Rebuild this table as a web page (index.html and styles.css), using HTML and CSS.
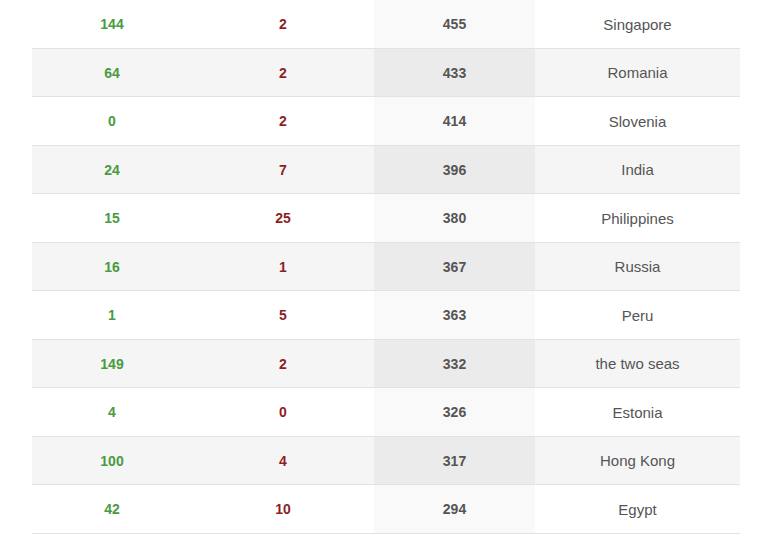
FILE: index.html
```html
<!DOCTYPE html>
<html>
<head>
<meta charset="utf-8">
<link rel="stylesheet" href="styles.css">
</head>
<body>
<table class="stats">
  <colgroup>
    <col class="c1"><col class="c2"><col class="c3"><col class="c4">
  </colgroup>
  <tbody>
    <tr><td class="pos">144</td><td class="neg">2</td><td class="total">455</td><td class="name">Singapore</td></tr>
    <tr><td class="pos">64</td><td class="neg">2</td><td class="total">433</td><td class="name">Romania</td></tr>
    <tr><td class="pos">0</td><td class="neg">2</td><td class="total">414</td><td class="name">Slovenia</td></tr>
    <tr><td class="pos">24</td><td class="neg">7</td><td class="total">396</td><td class="name">India</td></tr>
    <tr><td class="pos">15</td><td class="neg">25</td><td class="total">380</td><td class="name">Philippines</td></tr>
    <tr><td class="pos">16</td><td class="neg">1</td><td class="total">367</td><td class="name">Russia</td></tr>
    <tr><td class="pos">1</td><td class="neg">5</td><td class="total">363</td><td class="name">Peru</td></tr>
    <tr><td class="pos">149</td><td class="neg">2</td><td class="total">332</td><td class="name">the two seas</td></tr>
    <tr><td class="pos">4</td><td class="neg">0</td><td class="total">326</td><td class="name">Estonia</td></tr>
    <tr><td class="pos">100</td><td class="neg">4</td><td class="total">317</td><td class="name">Hong Kong</td></tr>
    <tr><td class="pos">42</td><td class="neg">10</td><td class="total">294</td><td class="name">Egypt</td></tr>
  </tbody>
</table>
</body>
</html>
```

FILE: styles.css
```css
html, body {
  margin: 0;
  padding: 0;
  background: #ffffff;
}

body {
  padding-left: 32px;
  font-family: "Liberation Sans", Arial, Helvetica, sans-serif;
  font-size: 14px;
  color: #555555;
  overflow: hidden;
}

.stats {
  width: 708px;
  border-collapse: collapse;
  table-layout: fixed;
}

.c1 { width: 160px; }
.c2 { width: 182px; }
.c3 { width: 161px; }
.c4 { width: 205px; }

.stats td {
  height: 46.5px;
  padding: 1px 0 0 0;
  text-align: center;
  vertical-align: middle;
  border-bottom: 1px solid #e2e2e2;
}

.stats tr:nth-child(even) td {
  background: #f5f5f5;
}

.stats td.total {
  background: #f9f9f9;
  font-weight: bold;
  color: #555555;
}

.stats tr:nth-child(even) td.total {
  background: #ebebeb;
}

.pos {
  color: #4a9b3f;
  font-weight: bold;
}

.neg {
  color: #8e1f1f;
  font-weight: bold;
}

.name {
  color: #555555;
  font-size: 15px;
}
```
